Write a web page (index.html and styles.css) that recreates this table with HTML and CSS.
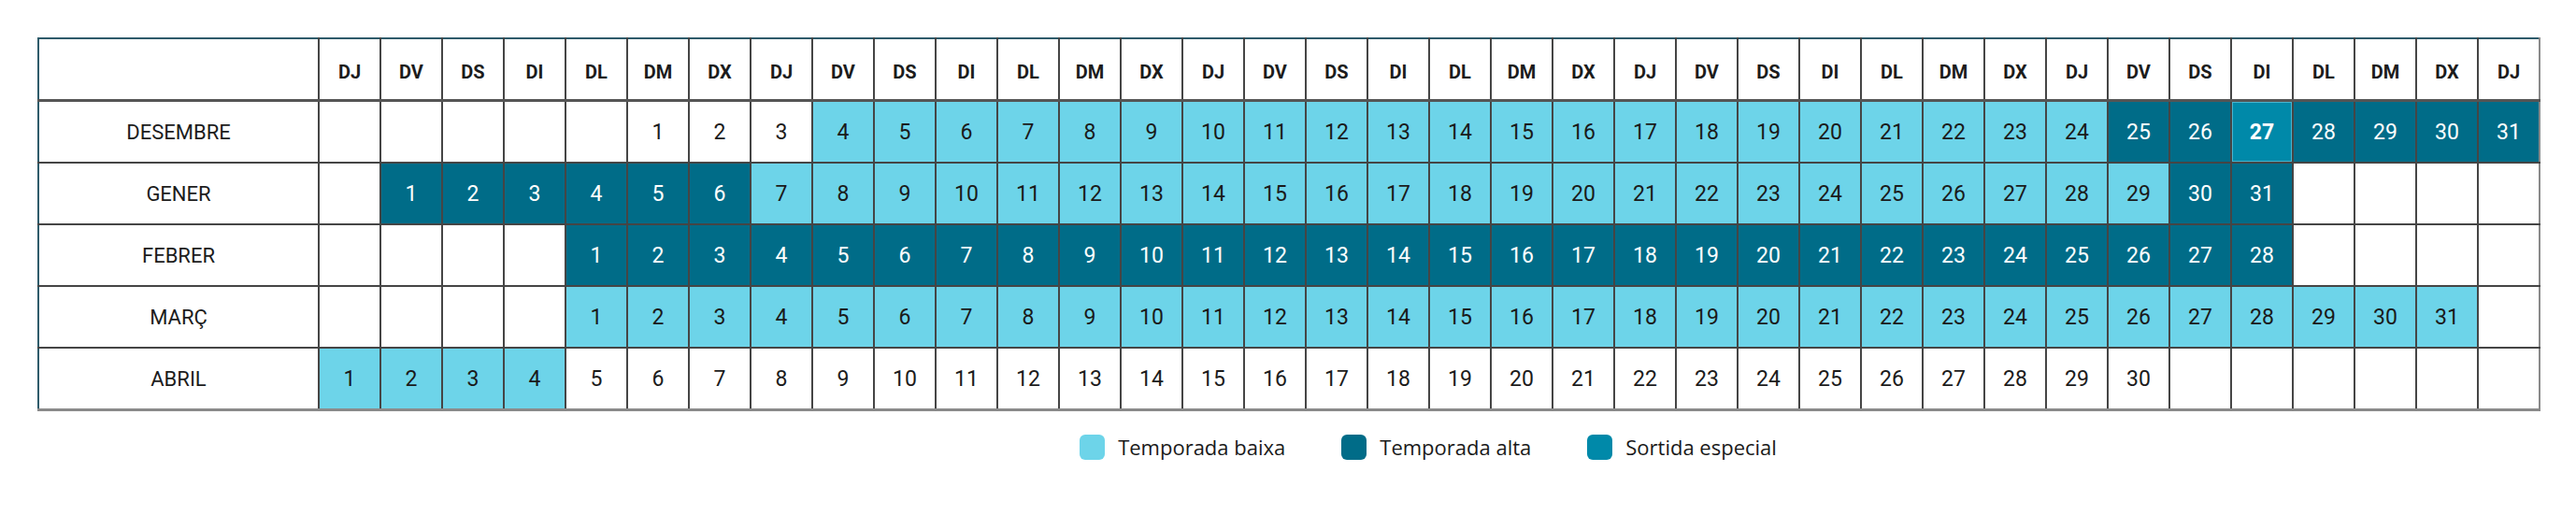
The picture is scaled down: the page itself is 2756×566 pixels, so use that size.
FILE: index.html
```html
<!DOCTYPE html>
<html lang="ca">
<head>
<meta charset="utf-8">
<title>Calendari de temporades</title>
<link rel="stylesheet" href="styles.css">
</head>
<body>
<div class="page">
<table class="cal">
<colgroup><col class="c-name"><col span="36" class="c-day"></colgroup>
<thead>
<tr><th></th><th>DJ</th><th>DV</th><th>DS</th><th>DI</th><th>DL</th><th>DM</th><th>DX</th><th>DJ</th><th>DV</th><th>DS</th><th>DI</th><th>DL</th><th>DM</th><th>DX</th><th>DJ</th><th>DV</th><th>DS</th><th>DI</th><th>DL</th><th>DM</th><th>DX</th><th>DJ</th><th>DV</th><th>DS</th><th>DI</th><th>DL</th><th>DM</th><th>DX</th><th>DJ</th><th>DV</th><th>DS</th><th>DI</th><th>DL</th><th>DM</th><th>DX</th><th>DJ</th></tr>
</thead>
<tbody>
<tr><td class="m">DESEMBRE</td><td></td><td></td><td></td><td></td><td></td><td>1</td><td>2</td><td>3</td><td class="lo">4</td><td class="lo">5</td><td class="lo">6</td><td class="lo">7</td><td class="lo">8</td><td class="lo">9</td><td class="lo">10</td><td class="lo">11</td><td class="lo">12</td><td class="lo">13</td><td class="lo">14</td><td class="lo">15</td><td class="lo">16</td><td class="lo">17</td><td class="lo">18</td><td class="lo">19</td><td class="lo">20</td><td class="lo">21</td><td class="lo">22</td><td class="lo">23</td><td class="lo">24</td><td class="hi">25</td><td class="hi">26</td><td class="sp">27</td><td class="hi">28</td><td class="hi">29</td><td class="hi">30</td><td class="hi">31</td></tr>
<tr><td class="m">GENER</td><td></td><td class="hi">1</td><td class="hi">2</td><td class="hi">3</td><td class="hi">4</td><td class="hi">5</td><td class="hi">6</td><td class="lo">7</td><td class="lo">8</td><td class="lo">9</td><td class="lo">10</td><td class="lo">11</td><td class="lo">12</td><td class="lo">13</td><td class="lo">14</td><td class="lo">15</td><td class="lo">16</td><td class="lo">17</td><td class="lo">18</td><td class="lo">19</td><td class="lo">20</td><td class="lo">21</td><td class="lo">22</td><td class="lo">23</td><td class="lo">24</td><td class="lo">25</td><td class="lo">26</td><td class="lo">27</td><td class="lo">28</td><td class="lo">29</td><td class="hi">30</td><td class="hi">31</td><td></td><td></td><td></td><td></td></tr>
<tr><td class="m">FEBRER</td><td></td><td></td><td></td><td></td><td class="hi">1</td><td class="hi">2</td><td class="hi">3</td><td class="hi">4</td><td class="hi">5</td><td class="hi">6</td><td class="hi">7</td><td class="hi">8</td><td class="hi">9</td><td class="hi">10</td><td class="hi">11</td><td class="hi">12</td><td class="hi">13</td><td class="hi">14</td><td class="hi">15</td><td class="hi">16</td><td class="hi">17</td><td class="hi">18</td><td class="hi">19</td><td class="hi">20</td><td class="hi">21</td><td class="hi">22</td><td class="hi">23</td><td class="hi">24</td><td class="hi">25</td><td class="hi">26</td><td class="hi">27</td><td class="hi">28</td><td></td><td></td><td></td><td></td></tr>
<tr><td class="m">MARÇ</td><td></td><td></td><td></td><td></td><td class="lo">1</td><td class="lo">2</td><td class="lo">3</td><td class="lo">4</td><td class="lo">5</td><td class="lo">6</td><td class="lo">7</td><td class="lo">8</td><td class="lo">9</td><td class="lo">10</td><td class="lo">11</td><td class="lo">12</td><td class="lo">13</td><td class="lo">14</td><td class="lo">15</td><td class="lo">16</td><td class="lo">17</td><td class="lo">18</td><td class="lo">19</td><td class="lo">20</td><td class="lo">21</td><td class="lo">22</td><td class="lo">23</td><td class="lo">24</td><td class="lo">25</td><td class="lo">26</td><td class="lo">27</td><td class="lo">28</td><td class="lo">29</td><td class="lo">30</td><td class="lo">31</td><td></td></tr>
<tr><td class="m">ABRIL</td><td class="lo">1</td><td class="lo">2</td><td class="lo">3</td><td class="lo">4</td><td>5</td><td>6</td><td>7</td><td>8</td><td>9</td><td>10</td><td>11</td><td>12</td><td>13</td><td>14</td><td>15</td><td>16</td><td>17</td><td>18</td><td>19</td><td>20</td><td>21</td><td>22</td><td>23</td><td>24</td><td>25</td><td>26</td><td>27</td><td>28</td><td>29</td><td>30</td><td></td><td></td><td></td><td></td><td></td><td></td></tr>
</tbody>
</table>
<div class="legend">
<div class="item"><span class="sw sw-lo"></span><span class="lbl">Temporada baixa</span></div>
<div class="item"><span class="sw sw-hi"></span><span class="lbl">Temporada alta</span></div>
<div class="item"><span class="sw sw-sp"></span><span class="lbl">Sortida especial</span></div>
</div>
</div>
</body>
</html>
```
FILE: styles.css
```css
html, body {
  margin: 0;
  padding: 0;
  background: #ffffff;
}
.page {
  padding: 40px 0 0 40px;
  font-family: Roboto, "Liberation Sans", sans-serif;
  color: #1c1c1c;
}
.cal {
  border-collapse: collapse;
  table-layout: fixed;
  width: 2676px;
}
.c-name { width: 300px; }
.c-day { width: 66px; }
.cal th, .cal td {
  border: 2px solid #454545;
  height: 64px;
  padding: 0;
  text-align: center;
  vertical-align: middle;
}
.cal th {
  font-weight: 700;
  font-size: 20px;
  padding-top: 6px;
  height: 58px;
  border-top: 2px solid #2e5b6a;
  border-bottom: 3px solid #555555;
}
.cal td {
  font-size: 23px;
  font-weight: 400;
}
.cal td.m {
  font-size: 22px;
  font-weight: 400;
}
.cal tr > :first-child { border-left: 2px solid #2e5b6a; }
.cal tr > :last-child { border-right: 2px solid #8a8a8a; }
.cal tbody tr:last-child td { border-bottom: 3px solid #8a8a8a; }
.cal td.lo { background: #6dd4e9; color: #1a1a1a; }
.cal td.hi { background: #006c88; color: #ffffff; }
.cal td.sp {
  background: #0089a9;
  color: #ffffff;
  font-weight: 700;
  box-shadow: inset 0 0 0 1px #48b4cf;
}
.legend {
  width: 2376px;
  margin: 23px 0 0 300px;
  display: flex;
  justify-content: center;
  gap: 60px;
}
.item {
  display: flex;
  align-items: center;
  gap: 14px;
}
.sw {
  width: 27px;
  height: 27px;
  border-radius: 6px;
}
.sw-lo { background: #6dd4e9; }
.sw-hi { background: #006c88; }
.sw-sp { background: #0089a9; }
.lbl {
  font-family: "Open Sans", sans-serif;
  font-size: 22px;
  line-height: 30px;
  color: #1a1a1a;
}
```
